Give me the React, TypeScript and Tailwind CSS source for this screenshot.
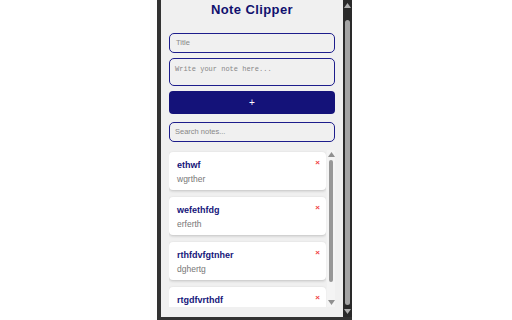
import React from "react";

const notes = [
  { title: "ethwf", body: "wgrther" },
  { title: "wefethfdg", body: "erferth" },
  { title: "rthfdvfgtnher", body: "dghertg" },
  { title: "rtgdfvrthdf", body: "" },
];

function Arrow({ up, color }: { up?: boolean; color: string }) {
  return (
    <svg width="7" height="5" viewBox="0 0 7 5" className="shrink-0">
      {up ? (
        <path d="M0 5 L3.5 0 L7 5 Z" fill={color} />
      ) : (
        <path d="M0 0 L3.5 5 L7 0 Z" fill={color} />
      )}
    </svg>
  );
}

export default function App() {
  return (
    <div className="w-[512px] h-[320px] bg-white overflow-hidden font-['Liberation_Sans',Arial,sans-serif]">
      <div className="ml-[157px] w-[195px] h-[320px] bg-[#333] pl-[4px] pb-[3px] flex">
        {/* popup */}
        <div className="w-[182px] h-[317px] bg-[#f0f0f0] px-[8px] pt-[1px] pb-[10px] flex flex-col">
          <h1 className="text-center text-[13px] leading-[18px] font-bold text-[#10106e] tracking-[0.4px]">
            Note Clipper
          </h1>

          <div className="mt-[14px] h-[20px] rounded-[5px] border border-[#1d1d8c] bg-[#f0f0f0] flex items-center px-[6px] text-[7.5px] text-[#888]">
            Title
          </div>

          <div className="mt-[5px] h-[28px] rounded-[5px] border border-[#1d1d8c] bg-[#f0f0f0] px-[5px] pt-[6px] text-[7px] leading-[9px] text-[#888] font-['Liberation_Mono',monospace]">
            Write your note here...
          </div>

          <div className="mt-[5px] h-[23px] rounded-[4px] bg-[#141279] flex items-center justify-center text-white text-[10px]">
            +
          </div>

          <div className="mt-[8px] h-[20px] rounded-[5px] border border-[#1d1d8c] bg-[#f0f0f0] flex items-center px-[5px] text-[7.5px] text-[#888]">
            Search notes...
          </div>

          {/* notes list */}
          <div className="mt-[8px] flex-1 flex min-h-0">
            <div className="flex-1 overflow-hidden flex flex-col gap-[7px] pt-[2px]">
              {notes.map((n) => (
                <div
                  key={n.title}
                  className="shrink-0 h-[38px] bg-white rounded-[4px] shadow-[0_1px_3px_rgba(0,0,0,0.2)] pl-[8px] pr-[6px] pt-[7px] flex justify-between"
                >
                  <div className="flex flex-col">
                    <span className="text-[9px] leading-[12px] font-bold text-[#15157a]">
                      {n.title}
                    </span>
                    {n.body && (
                      <span className="mt-[2px] text-[8.5px] leading-[12px] text-[#777]">
                        {n.body}
                      </span>
                    )}
                  </div>
                  <span className="text-[8px] leading-[8px] font-bold text-[#f04040]">
                    ×
                  </span>
                </div>
              ))}
            </div>
            {/* inner scrollbar */}
            <div className="w-[8px] ml-[1px] bg-[#f4f4f4] flex flex-col items-center pt-[2px] pb-[2px]">
              <Arrow up color="#909090" />
              <div className="mt-[3px] w-[4px] h-[122px] rounded-full bg-[#979797]" />
              <div className="flex-1" />
              <Arrow color="#909090" />
            </div>
          </div>
        </div>

        {/* outer scrollbar */}
        <div className="w-[9px] h-[317px] bg-[#2a2a2a] flex flex-col items-center pt-[3px] pb-[3px]">
          <Arrow up color="#b0b0b0" />
          <div className="mt-[12px] w-[5px] h-[285px] rounded-full bg-[#a4a4a4]" />
          <div className="flex-1" />
          <Arrow color="#b0b0b0" />
        </div>
      </div>
    </div>
  );
}
